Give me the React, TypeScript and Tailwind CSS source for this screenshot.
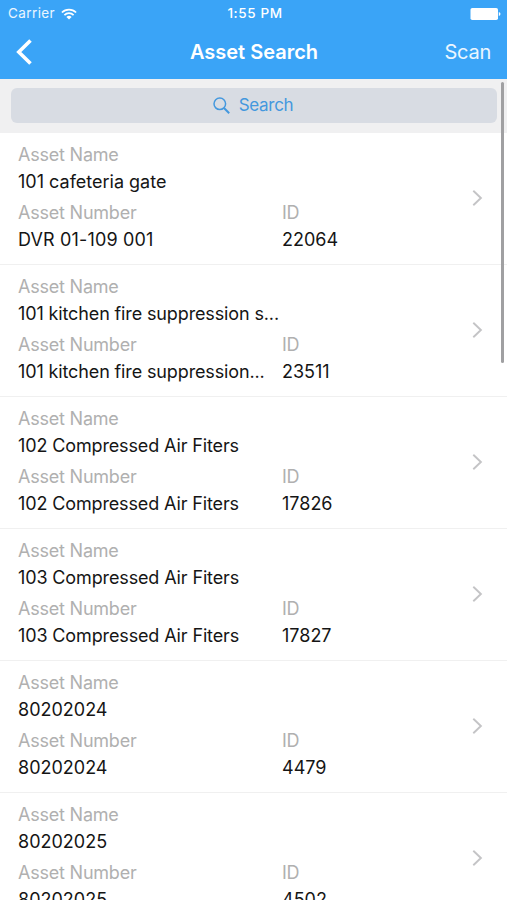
import React from "react";
import clsx from "clsx";

type Asset = {
  name: string;
  number: string;
  id: string;
};

const assets: Asset[] = [
  { name: "101 cafeteria gate", number: "DVR 01-109 001", id: "22064" },
  {
    name: "101 kitchen fire suppression s...",
    number: "101 kitchen fire suppression...",
    id: "23511",
  },
  { name: "102 Compressed Air Fiters", number: "102 Compressed Air Fiters", id: "17826" },
  { name: "103 Compressed Air Fiters", number: "103 Compressed Air Fiters", id: "17827" },
  { name: "80202024", number: "80202024", id: "4479" },
  { name: "80202025", number: "80202025", id: "4502" },
];

function WifiIcon() {
  return (
    <svg width="16" height="12" viewBox="0 0 16 12" fill="none" stroke="white" strokeWidth="1.7">
      <path d="M0.9 4.5a10 10 0 0 1 14.2 0" />
      <path d="M3.4 7.1a6.5 6.5 0 0 1 9.2 0" />
      <path d="M8 11.6 5.4 9a3.7 3.7 0 0 1 5.2 0z" fill="white" stroke="none" />
    </svg>
  );
}

function BatteryIcon() {
  return (
    <svg width="31" height="12" viewBox="0 0 31 12" fill="white">
      <rect x="0.5" y="0" width="27.5" height="12" rx="1.8" />
      <path d="M28.8 4q1.7 0.4 1.7 2t-1.7 2z" />
    </svg>
  );
}

function Field({ label, value }: { label: string; value: string }) {
  // long words are set a little tighter than codes and numbers
  const isWordy = value.length > 18;

  return (
    <div className="whitespace-nowrap">
      <div className="h-[26px] text-[18px] leading-[26px] tracking-[-0.22px] text-[#b0b0b0]">{label}</div>
      <div
        className={clsx(
          "h-7 text-[18px] leading-7 text-[#151515]",
          isWordy && "tracking-[-0.13px]",
          value.includes("-") && "tracking-[0.15px]"
        )}
      >
        {value}
      </div>
    </div>
  );
}

function AssetRow({ asset }: { asset: Asset }) {
  return (
    <li className="flex h-[132px] shrink-0 items-center justify-between border-b border-[#f0f0f0] pr-[24px] pl-[18px]">
      <div className="mb-px flex flex-col gap-1">
        <Field label="Asset Name" value={asset.name} />
        <div className="flex">
          <div className="w-[264px]">
            <Field label="Asset Number" value={asset.number} />
          </div>
          <Field label="ID" value={asset.id} />
        </div>
      </div>
      <svg className="mb-[2px]" width="11" height="18" viewBox="0 0 11 18" fill="none" stroke="#c4c4c6" strokeWidth="1.9">
        <path d="m1.3 1.7 7.6 7.3-7.6 7.3" />
      </svg>
    </li>
  );
}

export default function App() {
  return (
    <main className="relative flex h-[900px] w-[507px] flex-col overflow-hidden bg-white font-['Inter',sans-serif]">
      <header className="h-[79px] shrink-0 bg-[#3aa4f7] text-white">
        <div className="grid h-[27px] grid-cols-3 items-center pr-[6px] pl-2 text-[13.5px] leading-[27px]">
          <div className="flex items-center gap-[6px]">
            <span className="tracking-[0.4px] text-white/90">Carrier</span>
            <WifiIcon />
          </div>
          <span className="pl-px text-center font-medium tracking-[0.6px]">1:55 PM</span>
          <div className="flex justify-end">
            <BatteryIcon />
          </div>
        </div>
        <div className="grid h-[50px] grid-cols-3 items-center px-4">
          <svg width="18" height="28" viewBox="0 0 18 28" fill="none" stroke="white" strokeWidth="3.6">
            <path d="M14.5 2.5 2.8 14l11.7 11.5" />
          </svg>
          <h1 className="pl-px text-center text-[20px] font-semibold whitespace-nowrap">Asset Search</h1>
          <span className="text-right text-[20px] tracking-[-0.25px] text-white/90">Scan</span>
        </div>
      </header>

      <div className="h-[54px] shrink-0 bg-[#f0f0f1] pt-[9px] pr-[10px] pl-[11px]">
        <div className="flex h-[35px] items-center justify-center gap-[9px] rounded-[6px] bg-[#d8dce3] pr-[2px] text-[#4498de]">
          <svg width="17" height="17" viewBox="0 0 17 17" fill="none" stroke="currentColor" strokeWidth="1.5">
            <circle cx="6.8" cy="6.8" r="5.8" />
            <path d="m11 11 5.2 5.2" strokeWidth="2" />
          </svg>
          <span className="pt-px text-[17px] tracking-[-0.3px]">Search</span>
        </div>
      </div>

      <ul className="flex flex-col">
        {assets.map((asset) => (
          <AssetRow key={asset.id} asset={asset} />
        ))}
      </ul>

      {/* scroll indicator */}
      <div className="absolute top-[82px] right-[3px] h-[281px] w-[3px] rounded-full bg-[#a0a0a2]" />
    </main>
  );
}
